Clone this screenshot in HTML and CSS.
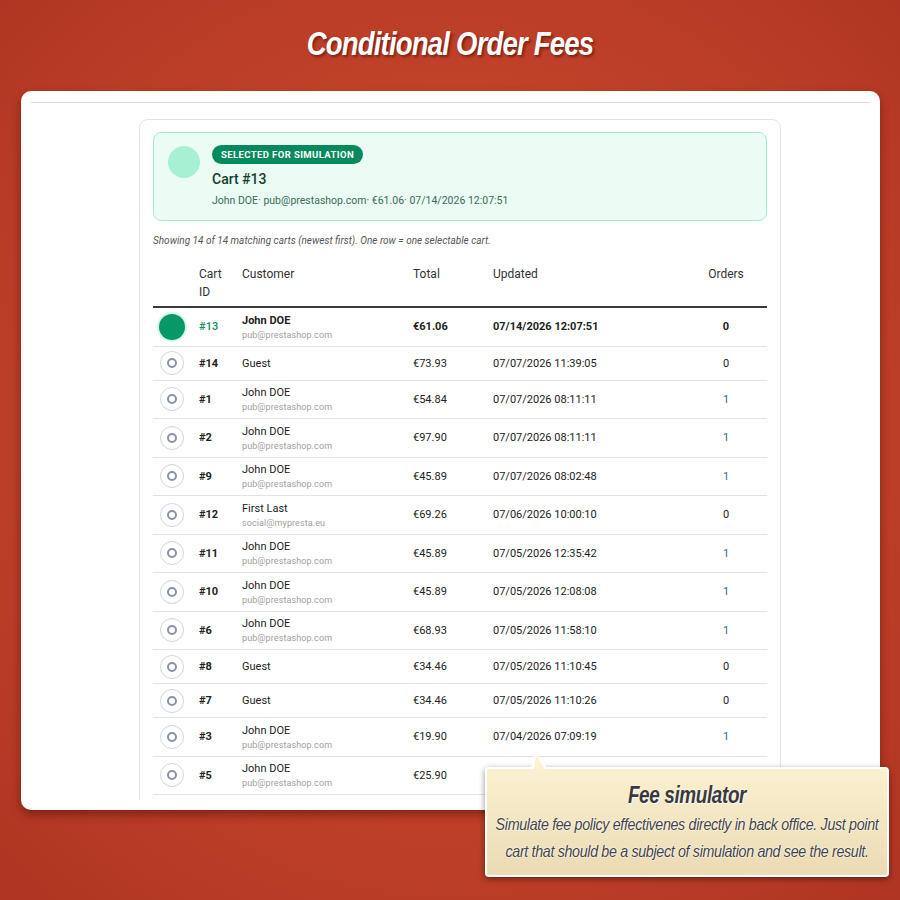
FILE: index.html
```html
<!DOCTYPE html>
<html>
<head>
<meta charset="utf-8">
<link rel="stylesheet" href="styles.css">
</head>
<body>
<div class="page">
  <h1 class="title">Conditional Order Fees</h1>
  <div class="card">
    <div class="topline"></div>
    <div class="viewport">
      <div class="panel">
        <div class="selected">
          <div class="sel-dot"></div>
          <div class="sel-info">
            <span class="badge">SELECTED FOR SIMULATION</span>
            <div class="sel-title">Cart #13</div>
            <div class="sel-meta">John DOE· pub@prestashop.com· €61.06· 07/14/2026 12:07:51</div>
          </div>
        </div>
        <p class="caption">Showing 14 of 14 matching carts (newest first). One row = one selectable cart.</p>
        <table class="carts">
          <colgroup>
            <col class="c-radio"><col class="c-id"><col class="c-cust"><col class="c-total"><col class="c-upd"><col class="c-ord">
          </colgroup>
          <thead>
            <tr><th></th><th>Cart<br>ID</th><th>Customer</th><th>Total</th><th>Updated</th><th class="ord">Orders</th></tr>
          </thead>
          <tbody>
            <tr class="is-sel"><td><span class="radio on"></span></td><td class="id">#13</td><td><div class="name">John DOE</div><div class="mail">pub@prestashop.com</div></td><td>€61.06</td><td>07/14/2026 12:07:51</td><td class="ord">0</td></tr>
            <tr><td><span class="radio"></span></td><td class="id">#14</td><td><div class="name">Guest</div></td><td>€73.93</td><td>07/07/2026 11:39:05</td><td class="ord">0</td></tr>
            <tr><td><span class="radio"></span></td><td class="id">#1</td><td><div class="name">John DOE</div><div class="mail">pub@prestashop.com</div></td><td>€54.84</td><td>07/07/2026 08:11:11</td><td class="ord one">1</td></tr>
            <tr><td><span class="radio"></span></td><td class="id">#2</td><td><div class="name">John DOE</div><div class="mail">pub@prestashop.com</div></td><td>€97.90</td><td>07/07/2026 08:11:11</td><td class="ord one">1</td></tr>
            <tr><td><span class="radio"></span></td><td class="id">#9</td><td><div class="name">John DOE</div><div class="mail">pub@prestashop.com</div></td><td>€45.89</td><td>07/07/2026 08:02:48</td><td class="ord one">1</td></tr>
            <tr><td><span class="radio"></span></td><td class="id">#12</td><td><div class="name">First Last</div><div class="mail">social@mypresta.eu</div></td><td>€69.26</td><td>07/06/2026 10:00:10</td><td class="ord">0</td></tr>
            <tr><td><span class="radio"></span></td><td class="id">#11</td><td><div class="name">John DOE</div><div class="mail">pub@prestashop.com</div></td><td>€45.89</td><td>07/05/2026 12:35:42</td><td class="ord one">1</td></tr>
            <tr><td><span class="radio"></span></td><td class="id">#10</td><td><div class="name">John DOE</div><div class="mail">pub@prestashop.com</div></td><td>€45.89</td><td>07/05/2026 12:08:08</td><td class="ord one">1</td></tr>
            <tr><td><span class="radio"></span></td><td class="id">#6</td><td><div class="name">John DOE</div><div class="mail">pub@prestashop.com</div></td><td>€68.93</td><td>07/05/2026 11:58:10</td><td class="ord one">1</td></tr>
            <tr><td><span class="radio"></span></td><td class="id">#8</td><td><div class="name">Guest</div></td><td>€34.46</td><td>07/05/2026 11:10:45</td><td class="ord">0</td></tr>
            <tr><td><span class="radio"></span></td><td class="id">#7</td><td><div class="name">Guest</div></td><td>€34.46</td><td>07/05/2026 11:10:26</td><td class="ord">0</td></tr>
            <tr><td><span class="radio"></span></td><td class="id">#3</td><td><div class="name">John DOE</div><div class="mail">pub@prestashop.com</div></td><td>€19.90</td><td>07/04/2026 07:09:19</td><td class="ord one">1</td></tr>
            <tr><td><span class="radio"></span></td><td class="id">#5</td><td><div class="name">John DOE</div><div class="mail">pub@prestashop.com</div></td><td>€25.90</td><td>07/04/2026 07:01:12</td><td class="ord one">1</td></tr>
            <tr><td><span class="radio"></span></td><td class="id">#4</td><td><div class="name">John DOE</div><div class="mail">pub@prestashop.com</div></td><td>€25.90</td><td>07/04/2026 06:58:40</td><td class="ord one">1</td></tr>
          </tbody>
        </table>
      </div>
    </div>
  </div>
  <div class="tip">
    <div class="tip-title">Fee simulator</div>
    <div class="tip-body">Simulate fee policy effectivenes directly in back office. Just point cart that should be a subject of simulation and see the result.</div>
  </div>
</div>
</body>
</html>
```

FILE: styles.css
```css
html, body {
  margin: 0;
  padding: 0;
}
body {
  width: 900px;
  height: 900px;
  overflow: hidden;
  background: radial-gradient(ellipse 75% 75% at 50% 48%, #cf4a2b 0%, #c4432a 45%, #ad3421 100%);
  font-family: Roboto, "Liberation Sans", sans-serif;
  color: #222;
}
.page {
  position: relative;
  width: 900px;
  height: 900px;
}
.title {
  margin: 0;
  height: 91px;
  box-sizing: border-box;
  padding-top: 23px;
  text-align: center;
  font-family: "Liberation Sans", Arial, sans-serif;
  font-style: italic;
  font-weight: 700;
  font-size: 34px;
  line-height: 40px;
  letter-spacing: -1px;
  color: #fff;
  transform: scaleX(0.81);
  transform-origin: 450px 0;
  text-shadow: 2px 2px 3px rgba(60, 10, 0, 0.55);
}
.card {
  margin-left: 21px;
  width: 859px;
  height: 719px;
  box-sizing: border-box;
  background: #fff;
  border-radius: 10px;
  padding: 11px 10px 0;
  box-shadow: 0 5px 10px rgba(60, 10, 0, 0.45);
}
.topline {
  height: 1px;
  background: #dcdcdc;
}
.viewport {
  height: 697px;
  overflow: hidden;
  padding-top: 16px;
  box-sizing: border-box;
}
.panel {
  margin-left: 108px;
  width: 642px;
  box-sizing: border-box;
  border: 1px solid #dde3ec;
  border-radius: 9px;
  padding: 12px 13px 0 13px;
}
.selected {
  display: flex;
  align-items: flex-start;
  gap: 12px;
  background: #eafcf4;
  border: 1.5px solid #a5ebcf;
  border-radius: 8px;
  padding: 12px 14px 12px 14px;
  height: 89px;
  box-sizing: border-box;
}
.sel-dot {
  width: 32px;
  height: 32px;
  border-radius: 50%;
  background: #a8f0d3;
  margin-top: 1px;
}
.sel-info {
  display: flex;
  flex-direction: column;
  align-items: flex-start;
}
.badge {
  display: inline-block;
  background: #058a5d;
  color: #fff;
  font-size: 9.5px;
  font-weight: 700;
  letter-spacing: 0.4px;
  line-height: 19px;
  padding: 0 9px;
  border-radius: 10px;
}
.sel-title {
  margin-top: 6px;
  font-size: 14px;
  font-weight: 500;
  color: #123d30;
  line-height: 18px;
}
.sel-meta {
  margin-top: 6px;
  font-size: 10.5px;
  color: #3d6a58;
  line-height: 14px;
}
.caption {
  margin: 13px 0 0;
  font-size: 10px;
  font-style: italic;
  color: #555;
  line-height: 14px;
}
.carts {
  margin-top: 15px;
  width: 614px;
  border-collapse: collapse;
  table-layout: fixed;
  font-size: 11px;
}
.c-radio { width: 46px; }
.c-id { width: 43px; }
.c-cust { width: 171px; }
.c-total { width: 80px; }
.c-upd { width: 192px; }
.c-ord { width: 82px; }
.carts th {
  text-align: left;
  font-weight: 400;
  font-size: 12px;
  color: #333;
  line-height: 18px;
  padding: 2px 0 5px;
  vertical-align: top;
  border-bottom: 2px solid #3a3a3a;
}
.carts th.ord, .carts td.ord {
  text-align: center;
}
.carts td {
  padding: 3.5px 0;
  border-bottom: 1px solid #e3e3e3;
  vertical-align: middle;
  color: #222;
}
.carts td.id {
  font-weight: 700;
}
.name {
  line-height: 17px;
}
.mail {
  font-size: 9px;
  color: #a0a0a0;
  line-height: 13.5px;
  letter-spacing: 0.1px;
}
.is-sel td {
  font-weight: 700;
}
.is-sel td.id {
  color: #168a5f;
  font-weight: 500;
}
.is-sel .mail {
  font-weight: 400;
}
.ord.one {
  color: #2a6aa0;
}
.radio {
  display: block;
  margin: 1px 0 1px 7px;
  width: 24px;
  height: 24px;
  box-sizing: border-box;
  border-radius: 50%;
  border: 1px solid #cdd4e0;
  position: relative;
  background: #fff;
}
.radio::after {
  content: "";
  position: absolute;
  left: 6px;
  top: 6px;
  width: 10px;
  height: 10px;
  box-sizing: border-box;
  border-radius: 50%;
  border: 2px solid #8a93a8;
}
.radio.on {
  width: 26px;
  height: 26px;
  margin: 0 0 0 6px;
  border: none;
  background: #069866;
  box-shadow: 0 0 0 2px #d6f5e8;
}
.radio.on::after {
  display: none;
}
.tip {
  position: absolute;
  left: 485px;
  top: 767px;
  width: 404px;
  height: 110px;
  box-sizing: border-box;
  border: 2px solid #fff;
  border-radius: 4px;
  background: linear-gradient(#fbf0d0, #ebdbb3);
  box-shadow: 0 2px 6px rgba(0, 0, 0, 0.45);
  text-align: center;
  font-family: "Liberation Sans", Arial, sans-serif;
  font-style: italic;
  padding-top: 13px;
}
.tip::before {
  content: "";
  position: absolute;
  left: 44px;
  top: -17px;
  width: 0;
  height: 0;
  border-left: 4px solid transparent;
  border-right: 12px solid transparent;
  border-bottom: 16px solid #fff;
}
.tip::after {
  content: "";
  position: absolute;
  left: 47px;
  top: -13px;
  width: 0;
  height: 0;
  border-left: 2px solid transparent;
  border-right: 9px solid transparent;
  border-bottom: 13px solid #fbf0d0;
}
.tip-title {
  font-weight: 700;
  font-size: 24px;
  line-height: 26px;
  letter-spacing: -0.5px;
  color: #3a3a3a;
  transform: scaleX(0.79);
  text-shadow: 0 0 2px #fff, 1px 1px 1px #fff;
}
.tip-body {
  margin: 3px 0 0 -30px;
  width: 460px;
  font-size: 17px;
  line-height: 27px;
  color: #444;
  letter-spacing: -0.4px;
  transform: scaleX(0.84);
  text-shadow: 0 0 2px #fff, 0 0 2px #fff;
}
```
